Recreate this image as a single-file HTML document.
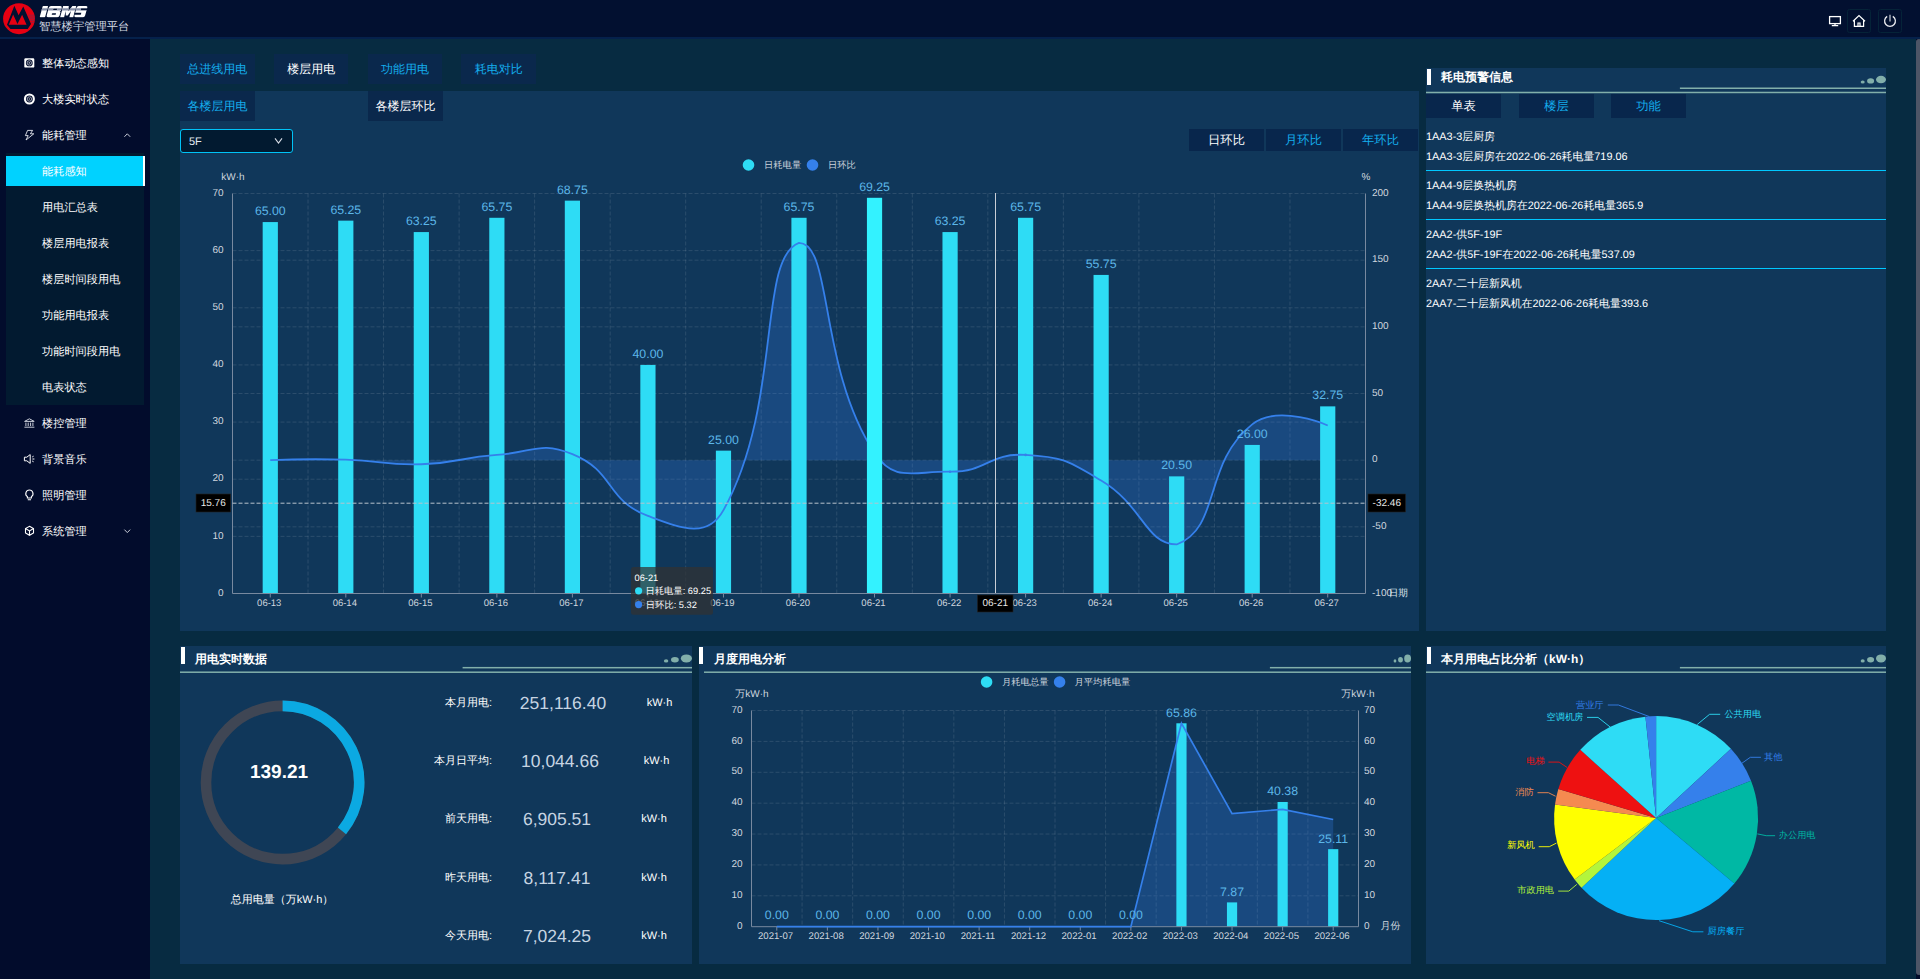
<!DOCTYPE html>
<html lang="zh"><head><meta charset="utf-8"><title>iBMS</title>
<style>
*{box-sizing:border-box;margin:0;padding:0}
html,body{text-rendering:geometricPrecision;width:1920px;height:979px;overflow:hidden;background:#072b41;font-family:"Liberation Sans", sans-serif;color:#fff}
.abs{position:absolute}
.hdr{position:absolute;left:0;top:0;width:1920px;height:37px;background:#021030}
.hline{position:absolute;left:0;top:37px;width:1920px;height:2px;background:#05214b}
.side{position:absolute;left:0;top:39px;width:150px;height:940px;background:#020c2c}
.sub{position:absolute;left:6px;top:153px;width:138px;height:252px;background:#021a30}
.mi{position:absolute;left:42px;height:36px;line-height:37px;font-size:11.2px;color:#fff;white-space:nowrap;font-weight:500}
.act{position:absolute;left:6px;top:156px;width:139px;height:30px;background:#00d2ff;border-right:2px solid #fff}
.tab{position:absolute;width:75px;height:30px;line-height:31.5px;text-align:center;font-size:12px;background:#0a284c;color:#14aeee;white-space:nowrap}
.tab.on{color:#fff}
.btn{position:absolute;width:75px;height:22px;line-height:23.6px;text-align:center;font-size:12.3px;background:#08264c;color:#14aeee;white-space:nowrap}
.btn.on{color:#fff}
.panel{position:absolute;background:#10375a}
.ptitle{position:absolute;font-size:12px;font-weight:bold;color:#fff;white-space:nowrap;line-height:16px}
.pbar{position:absolute;width:4.5px;background:#fff}
.li{position:absolute;left:1426px;font-size:10.9px;color:#fff;white-space:nowrap;line-height:14px}
.sep{position:absolute;left:1426px;width:460px;height:1px;background:#00c8ff}
.rl{position:absolute;font-size:11px;color:#fff;white-space:nowrap;text-align:right;line-height:16px}
.rv{position:absolute;font-size:17.5px;color:#c6d4e2;white-space:nowrap;text-align:center;line-height:22px}
.ru{position:absolute;font-size:11px;color:#fff;white-space:nowrap;line-height:16px}
svg text{font-family:"Liberation Sans", sans-serif;text-rendering:geometricPrecision}
</style></head><body>
<div class="hdr"></div><div class="hline"></div><svg class="abs" style="left:0;top:0" width="160" height="38" viewBox="0 0 160 38">
<ellipse cx="19.0" cy="18.7" rx="15.9" ry="15.45" fill="#e60012"/>
<path d="M14.35 5.8 L6.98 24.8 L10.5 28.9 L27.7 28.9 L31.0 24.05 L23.3 6.4 L18.6 15.3 Z" fill="#021030"/>
<path d="M8.73 24.83 L13.19 14.55 L17.46 24.05 L22.11 14.74 L26.57 24.83 Z" fill="#e60012"/>
<path d="M28 15.2 H34.2 M28.8 17 H34.6 M29.6 18.8 H34.7 M30.4 20.6 H34.6 M31.2 22.4 H34.2" stroke="#7a2a50" stroke-width="0.8" opacity="0.9"/>
<defs><mask id="lgm" maskUnits="userSpaceOnUse" x="-2" y="-13" width="52" height="15">
<g fill="#fff">
<rect x="0" y="-11.4" width="5.4" height="11.4" rx="0.6"/>
<rect x="6.5" y="-11.4" width="12.9" height="11.4" rx="1.8"/>
<path d="M20.4 0 V-11.4 H26 L27 -6 L29.6 -11.4 H33.5 V0 H29.6 V-6.2 L27.6 -1.6 H25.6 L24.4 -6.2 V0 Z"/>
<rect x="34.3" y="-11.4" width="10.7" height="11.4" rx="1.6"/>
</g>
<g fill="#000">
<rect x="11.2" y="-8.9" width="4.2" height="1.5" rx="0.5"/>
<rect x="11.2" y="-4.1" width="4.2" height="1.5" rx="0.5"/>
<path d="M19.6 -6.5 L18.3 -5.7 L19.6 -4.9 Z"/>
<rect x="39" y="-9" width="6.5" height="2"/>
<rect x="33.8" y="-4.4" width="6.6" height="1.9"/>
</g></mask></defs>
<g transform="translate(39.7,17.2) skewX(-15.3) scale(1,0.985)">
<rect x="-1" y="-12" width="48" height="12.5" fill="#fff" mask="url(#lgm)"/>
<rect x="-1" y="-9.2" width="48" height="2.4" fill="#8790a8" mask="url(#lgm)"/>
</g>
</svg><div class="abs" style="left:39px;top:19px;font-size:11.3px;line-height:16px;color:#d3dae3;white-space:nowrap">智慧楼宇管理平台</div><svg class="abs" style="left:1820px;top:0" width="100" height="38" viewBox="1820 0 100 38" fill="none" stroke="#fff" stroke-width="1.3">
<rect x="1847.5" y="9.5" width="23" height="23" rx="2" stroke="#052338" stroke-width="1"/>
<rect x="1878.5" y="9.5" width="23" height="23" rx="2" stroke="#052338" stroke-width="1"/>
<rect x="1829.6" y="16.6" width="10.8" height="7" />
<path d="M1831.8 25.6 H1838.2 M1835 23.6 V25.6" />
<path d="M1853 21.3 L1859 15.6 L1865 21.3 M1854.4 20.4 V26.4 H1863.6 V20.4 M1858 26.4 V23 H1860 V26.4" stroke-width="1.2"/>
<path d="M1887.2 16.4 A5.4 5.4 0 1 0 1892.8 16.4" stroke="#e8e8ee"/>
<path d="M1890 14.8 V21.4" stroke="#9aa0b0" stroke-width="1.6"/>
</svg><div class="side"></div><div class="sub"></div><div class="act"></div><div class="mi" style="top:45.7px">整体动态感知</div><div class="mi" style="top:81.7px">大楼实时状态</div><div class="mi" style="top:117.7px">能耗管理</div><div class="mi" style="top:153.7px">能耗感知</div><div class="mi" style="top:189.7px">用电汇总表</div><div class="mi" style="top:225.7px">楼层用电报表</div><div class="mi" style="top:261.7px">楼层时间段用电</div><div class="mi" style="top:297.7px">功能用电报表</div><div class="mi" style="top:333.7px">功能时间段用电</div><div class="mi" style="top:369.7px">电表状态</div><div class="mi" style="top:405.7px">楼控管理</div><div class="mi" style="top:441.7px">背景音乐</div><div class="mi" style="top:477.7px">照明管理</div><div class="mi" style="top:513.7px">系统管理</div><svg class="abs" style="left:0;top:39px" width="150" height="520" viewBox="0 39 150 520" fill="none" stroke="#fff" stroke-width="1.1">
<rect x="24.3" y="58.2" width="10" height="9.4" rx="1.2" fill="#fff" stroke="none"/>
<circle cx="29.3" cy="62.9" r="3.4" fill="#020c2c" stroke="none"/>
<circle cx="29.3" cy="62.9" r="2.2" fill="none" stroke="#a8aebb" stroke-width="0.9"/>
<circle cx="29.3" cy="62.9" r="0.8" fill="#a8aebb" stroke="none"/>
<circle cx="29.4" cy="99" r="5.5" fill="#fff" stroke="none"/>
<circle cx="29.4" cy="99" r="3.4" fill="#020c2c" stroke="none"/>
<circle cx="29.4" cy="99" r="2.2" fill="none" stroke="#a8aebb" stroke-width="0.9"/>
<circle cx="29.4" cy="99" r="0.8" fill="#a8aebb" stroke="none"/>
<path d="M27.6 130.4 L32.6 130.4 L30.4 133.8 L33.8 133.8 L26 140 L28.2 135.6 L25.4 135.6 Z" stroke-width="0.9" stroke="#e8eaf0"/>
<path d="M124.4 136.8 L127.3 133.8 L130.2 136.8" stroke="#c8ccd8" stroke-width="1"/>
<path d="M24.6 421.4 L29.4 418.8 L34.2 421.4 Z M25.9 422.6 V426 M28.2 422.6 V426 M30.6 422.6 V426 M32.9 422.6 V426 M24.4 427.2 H34.4" stroke-width="1" stroke="#c9cdd8"/>
<path d="M24.4 457.2 H26.8 L30.2 454.6 V463.4 L26.8 460.8 H24.4 Z M32.2 457 L33.6 456.2 M32.4 459 H34.4 M32.2 461 L33.6 461.8" stroke-width="1"/>
<path d="M29.4 490 A3.6 3.6 0 0 1 31.4 496.6 V498 H27.4 V496.6 A3.6 3.6 0 0 1 29.4 490 Z M27.8 499.8 H31" stroke-width="1.1"/>
<path d="M29.5 526.3 L33.5 528.5 V533 L29.5 535.3 L25.5 533 V528.5 Z M25.5 528.5 L29.5 530.9 L33.5 528.5 M29.5 530.9 V535.3" stroke-width="1.1"/>
<path d="M124.4 529.6 L127.3 532.6 L130.2 529.6" stroke="#c8ccd8" stroke-width="1"/>
</svg><div class="tab" style="left:180.0px;top:54px;width:74.7px">总进线用电</div><div class="tab on" style="left:273.8px;top:54px;width:74.7px">楼层用电</div><div class="tab" style="left:367.6px;top:54px;width:74.7px">功能用电</div><div class="tab" style="left:461.4px;top:54px;width:74.7px">耗电对比</div><div class="panel" style="left:180px;top:91px;width:1239px;height:540px"></div><div class="tab" style="left:180px;top:91px">各楼层用电</div><div class="tab on" style="left:368px;top:91px">各楼层环比</div><div class="abs" style="left:180px;top:129px;width:113px;height:24px;border:1.5px solid #00c3f7;border-radius:3px;background:#021a30"></div><div class="abs" style="left:189px;top:133.8px;font-size:11px;line-height:16px;color:#e6edf5">5F</div><svg class="abs" style="left:270px;top:132px" width="18" height="18" viewBox="270 132 18 18"><path d="M275 138.3 L278.5 143 L282 138.3" fill="none" stroke="#d8dde6" stroke-width="1.1"/></svg><div class="btn on" style="left:1189px;top:129px">日环比</div><div class="btn" style="left:1266px;top:129px">月环比</div><div class="btn" style="left:1343px;top:129px">年环比</div><div class="panel" style="left:1426px;top:68px;width:460px;height:563px"></div><div class="pbar" style="left:1426.9px;top:68.5px;height:16.4px;width:4.5px"></div><div class="ptitle" style="left:1441px;top:68.5px">耗电预警信息</div><svg class="abs" style="left:1426px;top:68px" width="460" height="30" viewBox="0 0 460 30"><rect x="0.0" y="23.73" width="460.0" height="1.5" fill="#82afaa"/><rect x="253.9" y="19.50" width="206.1" height="1.5" fill="#82afaa"/><ellipse cx="436.7" cy="13.90" rx="2.00" ry="1.50" fill="#82afaa"/><ellipse cx="444.6" cy="12.90" rx="3.50" ry="2.60" fill="#82afaa"/><ellipse cx="455.0" cy="11.60" rx="5.00" ry="3.75" fill="#82afaa"/></svg><div class="btn on" style="left:1426px;top:94.3px;height:23.7px;line-height:24.5px">单表</div><div class="btn" style="left:1519px;top:94.3px;height:23.7px;line-height:24.5px">楼层</div><div class="btn" style="left:1611px;top:94.3px;height:23.7px;line-height:24.5px">功能</div><div class="li" style="top:129.6px">1AA3-3层厨房</div><div class="li" style="top:149.6px">1AA3-3层厨房在2022-06-26耗电量719.06</div><div class="sep" style="top:170px"></div><div class="li" style="top:178.6px">1AA4-9层换热机房</div><div class="li" style="top:198.6px">1AA4-9层换热机房在2022-06-26耗电量365.9</div><div class="sep" style="top:219px"></div><div class="li" style="top:227.6px">2AA2-供5F-19F</div><div class="li" style="top:247.6px">2AA2-供5F-19F在2022-06-26耗电量537.09</div><div class="sep" style="top:268px"></div><div class="li" style="top:276.6px">2AA7-二十层新风机</div><div class="li" style="top:296.6px">2AA7-二十层新风机在2022-06-26耗电量393.6</div><div class="panel" style="left:180px;top:646px;width:512px;height:318px"></div><div class="panel" style="left:699px;top:646px;width:712px;height:318px"></div><div class="panel" style="left:1426px;top:646px;width:460px;height:318px"></div><div class="pbar" style="left:180.9px;top:646.5px;height:17.6px;width:4.5px"></div><div class="ptitle" style="left:195px;top:650.5px">用电实时数据</div><svg class="abs" style="left:180px;top:646px" width="512" height="30" viewBox="0 0 512 30"><rect x="0.0" y="25.46" width="512.0" height="1.5" fill="#82afaa"/><rect x="282.6" y="20.93" width="229.4" height="1.5" fill="#82afaa"/><ellipse cx="486.1" cy="14.88" rx="2.23" ry="1.61" fill="#82afaa"/><ellipse cx="494.9" cy="13.81" rx="3.90" ry="2.78" fill="#82afaa"/><ellipse cx="506.4" cy="12.42" rx="5.57" ry="4.01" fill="#82afaa"/></svg><div class="pbar" style="left:699.1px;top:646.5px;height:17.6px;width:3.5px"></div><div class="ptitle" style="left:714px;top:650.5px">月度用电分析</div><svg class="abs" style="left:699px;top:646px" width="712" height="30" viewBox="0 0 712 30"><rect x="5.0" y="25.46" width="707.0" height="1.5" fill="#82afaa"/><rect x="570.9" y="20.93" width="141.1" height="1.5" fill="#82afaa"/><ellipse cx="696.0" cy="14.88" rx="1.37" ry="1.61" fill="#82afaa"/><ellipse cx="701.5" cy="13.81" rx="2.40" ry="2.78" fill="#82afaa"/><ellipse cx="708.6" cy="12.42" rx="3.42" ry="4.01" fill="#82afaa"/></svg><div class="pbar" style="left:1426.9px;top:646.5px;height:17.6px;width:4.5px"></div><div class="ptitle" style="left:1441px;top:650.5px">本月用电占比分析（kW·h）</div><svg class="abs" style="left:1426px;top:646px" width="460" height="30" viewBox="0 0 460 30"><rect x="0.0" y="25.46" width="460.0" height="1.5" fill="#82afaa"/><rect x="253.9" y="20.93" width="206.1" height="1.5" fill="#82afaa"/><ellipse cx="436.7" cy="14.88" rx="2.00" ry="1.61" fill="#82afaa"/><ellipse cx="444.6" cy="13.81" rx="3.50" ry="2.78" fill="#82afaa"/><ellipse cx="455.0" cy="12.42" rx="5.00" ry="4.01" fill="#82afaa"/></svg><div class="rl" style="left:392px;width:100px;top:694.8px">本月用电:</div><div class="rv" style="left:503.0px;width:120px;top:691.8px">251,116.40</div><div class="ru" style="left:639.5px;width:40px;text-align:center;top:694.8px">kW·h</div><div class="rl" style="left:392px;width:100px;top:752.9px">本月日平均:</div><div class="rv" style="left:500.0px;width:120px;top:749.9px">10,044.66</div><div class="ru" style="left:636.5px;width:40px;text-align:center;top:752.9px">kW·h</div><div class="rl" style="left:392px;width:100px;top:810.7px">前天用电:</div><div class="rv" style="left:497.0px;width:120px;top:807.7px">6,905.51</div><div class="ru" style="left:634.0px;width:40px;text-align:center;top:810.7px">kW·h</div><div class="rl" style="left:392px;width:100px;top:869.5px">昨天用电:</div><div class="rv" style="left:497.0px;width:120px;top:866.5px">8,117.41</div><div class="ru" style="left:634.0px;width:40px;text-align:center;top:869.5px">kW·h</div><div class="rl" style="left:392px;width:100px;top:927.5px">今天用电:</div><div class="rv" style="left:497.0px;width:120px;top:924.5px">7,024.25</div><div class="ru" style="left:634.0px;width:40px;text-align:center;top:927.5px">kW·h</div><div class="abs" style="left:199px;width:160px;text-align:center;top:761.5px;font-size:19px;font-weight:bold;line-height:22px">139.21</div><div class="abs" style="left:202px;width:160px;text-align:center;top:892px;font-size:11px;line-height:16px;white-space:nowrap">总用电量（万kW·h）</div><div class="abs" style="left:1916px;top:39px;width:4px;height:940px;background:#020b2a"></div><div class="abs" style="left:1916px;top:39px;width:6px;height:935.6px;background:#4d5566;border-radius:3px"></div><svg class="abs" style="left:0;top:0" width="1920" height="979" viewBox="0 0 1920 979"><path d="M232.5 536.36 H1365.5" stroke="rgba(255,255,255,0.115)" stroke-width="1" stroke-dasharray="4 2" fill="none"/><path d="M232.5 479.21 H1365.5" stroke="rgba(255,255,255,0.115)" stroke-width="1" stroke-dasharray="4 2" fill="none"/><path d="M232.5 422.07 H1365.5" stroke="rgba(255,255,255,0.115)" stroke-width="1" stroke-dasharray="4 2" fill="none"/><path d="M232.5 364.93 H1365.5" stroke="rgba(255,255,255,0.115)" stroke-width="1" stroke-dasharray="4 2" fill="none"/><path d="M232.5 307.79 H1365.5" stroke="rgba(255,255,255,0.115)" stroke-width="1" stroke-dasharray="4 2" fill="none"/><path d="M232.5 250.64 H1365.5" stroke="rgba(255,255,255,0.115)" stroke-width="1" stroke-dasharray="4 2" fill="none"/><path d="M232.5 193.50 H1365.5" stroke="rgba(255,255,255,0.115)" stroke-width="1" stroke-dasharray="4 2" fill="none"/><path d="M232.5 526.83 H1365.5" stroke="rgba(255,255,255,0.115)" stroke-width="1" stroke-dasharray="4 2" fill="none"/><path d="M232.5 460.17 H1365.5" stroke="rgba(255,255,255,0.115)" stroke-width="1" stroke-dasharray="4 2" fill="none"/><path d="M232.5 393.50 H1365.5" stroke="rgba(255,255,255,0.115)" stroke-width="1" stroke-dasharray="4 2" fill="none"/><path d="M232.5 326.83 H1365.5" stroke="rgba(255,255,255,0.115)" stroke-width="1" stroke-dasharray="4 2" fill="none"/><path d="M232.5 260.17 H1365.5" stroke="rgba(255,255,255,0.115)" stroke-width="1" stroke-dasharray="4 2" fill="none"/><path d="M308.03 193.5 V593.5" stroke="rgba(255,255,255,0.115)" stroke-width="1" stroke-dasharray="4 2" fill="none"/><path d="M383.57 193.5 V593.5" stroke="rgba(255,255,255,0.115)" stroke-width="1" stroke-dasharray="4 2" fill="none"/><path d="M459.10 193.5 V593.5" stroke="rgba(255,255,255,0.115)" stroke-width="1" stroke-dasharray="4 2" fill="none"/><path d="M534.63 193.5 V593.5" stroke="rgba(255,255,255,0.115)" stroke-width="1" stroke-dasharray="4 2" fill="none"/><path d="M610.17 193.5 V593.5" stroke="rgba(255,255,255,0.115)" stroke-width="1" stroke-dasharray="4 2" fill="none"/><path d="M685.70 193.5 V593.5" stroke="rgba(255,255,255,0.115)" stroke-width="1" stroke-dasharray="4 2" fill="none"/><path d="M761.23 193.5 V593.5" stroke="rgba(255,255,255,0.115)" stroke-width="1" stroke-dasharray="4 2" fill="none"/><path d="M836.77 193.5 V593.5" stroke="rgba(255,255,255,0.115)" stroke-width="1" stroke-dasharray="4 2" fill="none"/><path d="M912.30 193.5 V593.5" stroke="rgba(255,255,255,0.115)" stroke-width="1" stroke-dasharray="4 2" fill="none"/><path d="M987.83 193.5 V593.5" stroke="rgba(255,255,255,0.115)" stroke-width="1" stroke-dasharray="4 2" fill="none"/><path d="M1063.37 193.5 V593.5" stroke="rgba(255,255,255,0.115)" stroke-width="1" stroke-dasharray="4 2" fill="none"/><path d="M1138.90 193.5 V593.5" stroke="rgba(255,255,255,0.115)" stroke-width="1" stroke-dasharray="4 2" fill="none"/><path d="M1214.43 193.5 V593.5" stroke="rgba(255,255,255,0.115)" stroke-width="1" stroke-dasharray="4 2" fill="none"/><path d="M1289.97 193.5 V593.5" stroke="rgba(255,255,255,0.115)" stroke-width="1" stroke-dasharray="4 2" fill="none"/><path d="M270.27 460.17 C270.27 460.17 308.07 458.64 345.80 459.66 C383.60 460.68 383.68 465.45 421.33 464.26 C459.21 463.07 458.96 457.45 496.87 454.90 C534.49 452.37 539.45 440.78 572.40 454.09 C614.98 471.29 605.40 500.14 647.93 515.93 C680.94 528.18 707.28 539.42 723.47 510.17 C782.82 402.88 757.13 258.66 799.00 242.83 C832.67 242.83 818.51 368.19 874.53 453.07 C894.04 482.63 912.20 471.26 950.07 471.71 C987.73 472.17 988.40 452.75 1025.60 454.90 C1063.93 457.12 1067.44 460.47 1101.13 480.45 C1142.97 505.26 1145.62 544.47 1176.67 544.47 C1221.15 527.97 1202.91 463.19 1252.20 424.39 C1278.45 403.73 1327.73 425.55 1327.73 425.55 L1327.73 460.17 L270.27 460.17 Z" fill="rgba(53,128,235,0.26)" stroke="none"/><rect x="262.67" y="222.07" width="15.20" height="371.43" fill="#2edcf5"/><rect x="338.20" y="220.64" width="15.20" height="372.86" fill="#2edcf5"/><rect x="413.73" y="232.07" width="15.20" height="361.43" fill="#2edcf5"/><rect x="489.27" y="217.79" width="15.20" height="375.71" fill="#2edcf5"/><rect x="564.80" y="200.64" width="15.20" height="392.86" fill="#2edcf5"/><rect x="640.33" y="364.93" width="15.20" height="228.57" fill="#2edcf5"/><rect x="715.87" y="450.64" width="15.20" height="142.86" fill="#2edcf5"/><rect x="791.40" y="217.79" width="15.20" height="375.71" fill="#2edcf5"/><rect x="942.47" y="232.07" width="15.20" height="361.43" fill="#2edcf5"/><rect x="1018.00" y="217.79" width="15.20" height="375.71" fill="#2edcf5"/><rect x="1093.53" y="274.93" width="15.20" height="318.57" fill="#2edcf5"/><rect x="1169.07" y="476.36" width="15.20" height="117.14" fill="#2edcf5"/><rect x="1244.60" y="444.93" width="15.20" height="148.57" fill="#2edcf5"/><rect x="1320.13" y="406.36" width="15.20" height="187.14" fill="#2edcf5"/><path d="M270.27 460.17 C270.27 460.17 308.07 458.64 345.80 459.66 C383.60 460.68 383.68 465.45 421.33 464.26 C459.21 463.07 458.96 457.45 496.87 454.90 C534.49 452.37 539.45 440.78 572.40 454.09 C614.98 471.29 605.40 500.14 647.93 515.93 C680.94 528.18 707.28 539.42 723.47 510.17 C782.82 402.88 757.13 258.66 799.00 242.83 C832.67 242.83 818.51 368.19 874.53 453.07 C894.04 482.63 912.20 471.26 950.07 471.71 C987.73 472.17 988.40 452.75 1025.60 454.90 C1063.93 457.12 1067.44 460.47 1101.13 480.45 C1142.97 505.26 1145.62 544.47 1176.67 544.47 C1221.15 527.97 1202.91 463.19 1252.20 424.39 C1278.45 403.73 1327.73 425.55 1327.73 425.55" fill="none" stroke="#3580eb" stroke-width="1.8"/><circle cx="950.07" cy="471.71" r="1.3" fill="#3580eb"/><circle cx="1025.60" cy="454.90" r="1.3" fill="#3580eb"/><rect x="866.93" y="197.79" width="15.20" height="395.71" fill="#33f2ff"/><path d="M232.5 193.5 V593.5 H1365.5 V193.5" stroke="#78899f" stroke-width="1" fill="none"/><path d="M270.27 593.5 V597.5" stroke="#78899f" stroke-width="1"/><text x="269.27" y="603.60" font-size="9.5" fill="#cfd6df" text-anchor="middle" font-weight="normal" dominant-baseline="central" >06-13</text><text x="270.27" y="211.17" font-size="12.3" fill="#5cb6e8" text-anchor="middle" font-weight="normal" dominant-baseline="central" >65.00</text><path d="M345.80 593.5 V597.5" stroke="#78899f" stroke-width="1"/><text x="344.80" y="603.60" font-size="9.5" fill="#cfd6df" text-anchor="middle" font-weight="normal" dominant-baseline="central" >06-14</text><text x="345.80" y="209.74" font-size="12.3" fill="#5cb6e8" text-anchor="middle" font-weight="normal" dominant-baseline="central" >65.25</text><path d="M421.33 593.5 V597.5" stroke="#78899f" stroke-width="1"/><text x="420.33" y="603.60" font-size="9.5" fill="#cfd6df" text-anchor="middle" font-weight="normal" dominant-baseline="central" >06-15</text><text x="421.33" y="221.17" font-size="12.3" fill="#5cb6e8" text-anchor="middle" font-weight="normal" dominant-baseline="central" >63.25</text><path d="M496.87 593.5 V597.5" stroke="#78899f" stroke-width="1"/><text x="495.87" y="603.60" font-size="9.5" fill="#cfd6df" text-anchor="middle" font-weight="normal" dominant-baseline="central" >06-16</text><text x="496.87" y="206.89" font-size="12.3" fill="#5cb6e8" text-anchor="middle" font-weight="normal" dominant-baseline="central" >65.75</text><path d="M572.40 593.5 V597.5" stroke="#78899f" stroke-width="1"/><text x="571.40" y="603.60" font-size="9.5" fill="#cfd6df" text-anchor="middle" font-weight="normal" dominant-baseline="central" >06-17</text><text x="572.40" y="189.74" font-size="12.3" fill="#5cb6e8" text-anchor="middle" font-weight="normal" dominant-baseline="central" >68.75</text><path d="M647.93 593.5 V597.5" stroke="#78899f" stroke-width="1"/><text x="646.93" y="603.60" font-size="9.5" fill="#cfd6df" text-anchor="middle" font-weight="normal" dominant-baseline="central" >06-18</text><text x="647.93" y="354.03" font-size="12.3" fill="#5cb6e8" text-anchor="middle" font-weight="normal" dominant-baseline="central" >40.00</text><path d="M723.47 593.5 V597.5" stroke="#78899f" stroke-width="1"/><text x="722.47" y="603.60" font-size="9.5" fill="#cfd6df" text-anchor="middle" font-weight="normal" dominant-baseline="central" >06-19</text><text x="723.47" y="439.74" font-size="12.3" fill="#5cb6e8" text-anchor="middle" font-weight="normal" dominant-baseline="central" >25.00</text><path d="M799.00 593.5 V597.5" stroke="#78899f" stroke-width="1"/><text x="798.00" y="603.60" font-size="9.5" fill="#cfd6df" text-anchor="middle" font-weight="normal" dominant-baseline="central" >06-20</text><text x="799.00" y="206.89" font-size="12.3" fill="#5cb6e8" text-anchor="middle" font-weight="normal" dominant-baseline="central" >65.75</text><path d="M874.53 593.5 V597.5" stroke="#78899f" stroke-width="1"/><text x="873.53" y="603.60" font-size="9.5" fill="#cfd6df" text-anchor="middle" font-weight="normal" dominant-baseline="central" >06-21</text><text x="874.53" y="186.89" font-size="12.3" fill="#5cb6e8" text-anchor="middle" font-weight="normal" dominant-baseline="central" >69.25</text><path d="M950.07 593.5 V597.5" stroke="#78899f" stroke-width="1"/><text x="949.07" y="603.60" font-size="9.5" fill="#cfd6df" text-anchor="middle" font-weight="normal" dominant-baseline="central" >06-22</text><text x="950.07" y="221.17" font-size="12.3" fill="#5cb6e8" text-anchor="middle" font-weight="normal" dominant-baseline="central" >63.25</text><path d="M1025.60 593.5 V597.5" stroke="#78899f" stroke-width="1"/><text x="1024.60" y="603.60" font-size="9.5" fill="#cfd6df" text-anchor="middle" font-weight="normal" dominant-baseline="central" >06-23</text><text x="1025.60" y="206.89" font-size="12.3" fill="#5cb6e8" text-anchor="middle" font-weight="normal" dominant-baseline="central" >65.75</text><path d="M1101.13 593.5 V597.5" stroke="#78899f" stroke-width="1"/><text x="1100.13" y="603.60" font-size="9.5" fill="#cfd6df" text-anchor="middle" font-weight="normal" dominant-baseline="central" >06-24</text><text x="1101.13" y="264.03" font-size="12.3" fill="#5cb6e8" text-anchor="middle" font-weight="normal" dominant-baseline="central" >55.75</text><path d="M1176.67 593.5 V597.5" stroke="#78899f" stroke-width="1"/><text x="1175.67" y="603.60" font-size="9.5" fill="#cfd6df" text-anchor="middle" font-weight="normal" dominant-baseline="central" >06-25</text><text x="1176.67" y="465.46" font-size="12.3" fill="#5cb6e8" text-anchor="middle" font-weight="normal" dominant-baseline="central" >20.50</text><path d="M1252.20 593.5 V597.5" stroke="#78899f" stroke-width="1"/><text x="1251.20" y="603.60" font-size="9.5" fill="#cfd6df" text-anchor="middle" font-weight="normal" dominant-baseline="central" >06-26</text><text x="1252.20" y="434.03" font-size="12.3" fill="#5cb6e8" text-anchor="middle" font-weight="normal" dominant-baseline="central" >26.00</text><path d="M1327.73 593.5 V597.5" stroke="#78899f" stroke-width="1"/><text x="1326.73" y="603.60" font-size="9.5" fill="#cfd6df" text-anchor="middle" font-weight="normal" dominant-baseline="central" >06-27</text><text x="1327.73" y="395.46" font-size="12.3" fill="#5cb6e8" text-anchor="middle" font-weight="normal" dominant-baseline="central" >32.75</text><text x="223.50" y="593.20" font-size="10" fill="#cfd6df" text-anchor="end" font-weight="normal" dominant-baseline="central" >0</text><text x="223.50" y="536.06" font-size="10" fill="#cfd6df" text-anchor="end" font-weight="normal" dominant-baseline="central" >10</text><text x="223.50" y="478.91" font-size="10" fill="#cfd6df" text-anchor="end" font-weight="normal" dominant-baseline="central" >20</text><text x="223.50" y="421.77" font-size="10" fill="#cfd6df" text-anchor="end" font-weight="normal" dominant-baseline="central" >30</text><text x="223.50" y="364.63" font-size="10" fill="#cfd6df" text-anchor="end" font-weight="normal" dominant-baseline="central" >40</text><text x="223.50" y="307.49" font-size="10" fill="#cfd6df" text-anchor="end" font-weight="normal" dominant-baseline="central" >50</text><text x="223.50" y="250.34" font-size="10" fill="#cfd6df" text-anchor="end" font-weight="normal" dominant-baseline="central" >60</text><text x="223.50" y="193.20" font-size="10" fill="#cfd6df" text-anchor="end" font-weight="normal" dominant-baseline="central" >70</text><text x="1372.00" y="593.20" font-size="10" fill="#cfd6df" text-anchor="start" font-weight="normal" dominant-baseline="central" >-100</text><text x="1372.00" y="526.53" font-size="10" fill="#cfd6df" text-anchor="start" font-weight="normal" dominant-baseline="central" >-50</text><text x="1372.00" y="459.87" font-size="10" fill="#cfd6df" text-anchor="start" font-weight="normal" dominant-baseline="central" >0</text><text x="1372.00" y="393.20" font-size="10" fill="#cfd6df" text-anchor="start" font-weight="normal" dominant-baseline="central" >50</text><text x="1372.00" y="326.53" font-size="10" fill="#cfd6df" text-anchor="start" font-weight="normal" dominant-baseline="central" >100</text><text x="1372.00" y="259.87" font-size="10" fill="#cfd6df" text-anchor="start" font-weight="normal" dominant-baseline="central" >150</text><text x="1372.00" y="193.20" font-size="10" fill="#cfd6df" text-anchor="start" font-weight="normal" dominant-baseline="central" >200</text><text x="233.00" y="177.40" font-size="10" fill="#cfd6df" text-anchor="middle" font-weight="normal" dominant-baseline="central" >kW·h</text><text x="1366.00" y="177.40" font-size="10" fill="#cfd6df" text-anchor="middle" font-weight="normal" dominant-baseline="central" >%</text><text x="1388.70" y="593.30" font-size="9.6" fill="#dfe5ec" text-anchor="start" font-weight="normal" dominant-baseline="central" >日期</text><circle cx="748.5" cy="165" r="5.8" fill="#2edcf5"/><text x="764.00" y="165.00" font-size="9.3" fill="#cfd6df" text-anchor="start" font-weight="normal" dominant-baseline="central" >日耗电量</text><circle cx="812.5" cy="165" r="5.8" fill="#3580eb"/><text x="828.00" y="165.00" font-size="9.3" fill="#cfd6df" text-anchor="start" font-weight="normal" dominant-baseline="central" >日环比</text><path d="M995.5 193 V593" stroke="#c9ced6" stroke-width="1"/><path d="M232.5 503.2 H1365.5" stroke="#b9c2cc" stroke-width="1" stroke-dasharray="4 2"/><rect x="196" y="494" width="34.5" height="18" fill="#000" stroke="#222" stroke-width="0.6"/><text x="213.20" y="503.60" font-size="10" fill="#e8e8e8" text-anchor="middle" font-weight="normal" dominant-baseline="central" >15.76</text><rect x="1368" y="494" width="37.5" height="18" fill="#000" stroke="#222" stroke-width="0.6"/><text x="1386.80" y="503.60" font-size="10" fill="#e8e8e8" text-anchor="middle" font-weight="normal" dominant-baseline="central" >-32.46</text><rect x="977.5" y="595" width="35.5" height="17" fill="#000" stroke="#222" stroke-width="0.6"/><text x="995.30" y="603.30" font-size="10" fill="#e8e8e8" text-anchor="middle" font-weight="normal" dominant-baseline="central" >06-21</text><rect x="631" y="567" width="82" height="47.8" rx="2.5" fill="rgba(50,50,50,0.72)"/><text x="634.50" y="577.50" font-size="9.3" fill="#fff" text-anchor="start" font-weight="normal" dominant-baseline="central" >06-21</text><circle cx="638.6" cy="590.8" r="3.6" fill="#2edcf5"/><text x="645.50" y="590.60" font-size="9.3" fill="#fff" text-anchor="start" font-weight="normal" dominant-baseline="central" >日耗电量: 69.25</text><circle cx="638.6" cy="604.6" r="3.6" fill="#3580eb"/><text x="645.80" y="605.00" font-size="9.3" fill="#fff" text-anchor="start" font-weight="normal" dominant-baseline="central" >日环比: 5.32</text><circle cx="282.6" cy="782.5" r="76.6" fill="none" stroke="#3f4654" stroke-width="10.6"/><path d="M282.60 705.90 A76.6 76.6 0 0 1 341.96 830.91" fill="none" stroke="#0ba9e2" stroke-width="10.6"/><path d="M751.5 895.81 H1358.5" stroke="rgba(255,255,255,0.115)" stroke-width="1" stroke-dasharray="4 2" fill="none"/><path d="M751.5 864.93 H1358.5" stroke="rgba(255,255,255,0.115)" stroke-width="1" stroke-dasharray="4 2" fill="none"/><path d="M751.5 834.04 H1358.5" stroke="rgba(255,255,255,0.115)" stroke-width="1" stroke-dasharray="4 2" fill="none"/><path d="M751.5 803.16 H1358.5" stroke="rgba(255,255,255,0.115)" stroke-width="1" stroke-dasharray="4 2" fill="none"/><path d="M751.5 772.27 H1358.5" stroke="rgba(255,255,255,0.115)" stroke-width="1" stroke-dasharray="4 2" fill="none"/><path d="M751.5 741.39 H1358.5" stroke="rgba(255,255,255,0.115)" stroke-width="1" stroke-dasharray="4 2" fill="none"/><path d="M751.5 710.50 H1358.5" stroke="rgba(255,255,255,0.115)" stroke-width="1" stroke-dasharray="4 2" fill="none"/><path d="M802.08 710.5 V926.7" stroke="rgba(255,255,255,0.115)" stroke-width="1" stroke-dasharray="4 2" fill="none"/><path d="M852.67 710.5 V926.7" stroke="rgba(255,255,255,0.115)" stroke-width="1" stroke-dasharray="4 2" fill="none"/><path d="M903.25 710.5 V926.7" stroke="rgba(255,255,255,0.115)" stroke-width="1" stroke-dasharray="4 2" fill="none"/><path d="M953.83 710.5 V926.7" stroke="rgba(255,255,255,0.115)" stroke-width="1" stroke-dasharray="4 2" fill="none"/><path d="M1004.42 710.5 V926.7" stroke="rgba(255,255,255,0.115)" stroke-width="1" stroke-dasharray="4 2" fill="none"/><path d="M1055.00 710.5 V926.7" stroke="rgba(255,255,255,0.115)" stroke-width="1" stroke-dasharray="4 2" fill="none"/><path d="M1105.58 710.5 V926.7" stroke="rgba(255,255,255,0.115)" stroke-width="1" stroke-dasharray="4 2" fill="none"/><path d="M1156.17 710.5 V926.7" stroke="rgba(255,255,255,0.115)" stroke-width="1" stroke-dasharray="4 2" fill="none"/><path d="M1206.75 710.5 V926.7" stroke="rgba(255,255,255,0.115)" stroke-width="1" stroke-dasharray="4 2" fill="none"/><path d="M1257.33 710.5 V926.7" stroke="rgba(255,255,255,0.115)" stroke-width="1" stroke-dasharray="4 2" fill="none"/><path d="M1307.92 710.5 V926.7" stroke="rgba(255,255,255,0.115)" stroke-width="1" stroke-dasharray="4 2" fill="none"/><path d="M776.79 926.70 L827.38 926.70 L877.96 926.70 L928.54 926.70 L979.12 926.70 L1029.71 926.70 L1080.29 926.70 L1130.88 926.70 L1181.46 723.29 L1232.04 813.66 L1282.62 809.33 L1333.21 819.53 L1333.21 926.70 L776.79 926.70 Z" fill="rgba(53,128,235,0.26)"/><rect x="1176.36" y="723.29" width="10.20" height="203.41" fill="#2edcf5"/><rect x="1226.94" y="902.39" width="10.20" height="24.31" fill="#2edcf5"/><rect x="1277.53" y="801.98" width="10.20" height="124.72" fill="#2edcf5"/><rect x="1328.11" y="849.15" width="10.20" height="77.55" fill="#2edcf5"/><path d="M751.5 710.5 V926.7 H1358.5 V710.5" stroke="#78899f" stroke-width="1" fill="none"/><path d="M776.79 926.7 V930.7" stroke="#78899f" stroke-width="1"/><text x="775.59" y="936.90" font-size="9.6" fill="#cfd6df" text-anchor="middle" font-weight="normal" dominant-baseline="central" >2021-07</text><path d="M827.38 926.7 V930.7" stroke="#78899f" stroke-width="1"/><text x="826.17" y="936.90" font-size="9.6" fill="#cfd6df" text-anchor="middle" font-weight="normal" dominant-baseline="central" >2021-08</text><path d="M877.96 926.7 V930.7" stroke="#78899f" stroke-width="1"/><text x="876.76" y="936.90" font-size="9.6" fill="#cfd6df" text-anchor="middle" font-weight="normal" dominant-baseline="central" >2021-09</text><path d="M928.54 926.7 V930.7" stroke="#78899f" stroke-width="1"/><text x="927.34" y="936.90" font-size="9.6" fill="#cfd6df" text-anchor="middle" font-weight="normal" dominant-baseline="central" >2021-10</text><path d="M979.12 926.7 V930.7" stroke="#78899f" stroke-width="1"/><text x="977.92" y="936.90" font-size="9.6" fill="#cfd6df" text-anchor="middle" font-weight="normal" dominant-baseline="central" >2021-11</text><path d="M1029.71 926.7 V930.7" stroke="#78899f" stroke-width="1"/><text x="1028.51" y="936.90" font-size="9.6" fill="#cfd6df" text-anchor="middle" font-weight="normal" dominant-baseline="central" >2021-12</text><path d="M1080.29 926.7 V930.7" stroke="#78899f" stroke-width="1"/><text x="1079.09" y="936.90" font-size="9.6" fill="#cfd6df" text-anchor="middle" font-weight="normal" dominant-baseline="central" >2022-01</text><path d="M1130.88 926.7 V930.7" stroke="#78899f" stroke-width="1"/><text x="1129.67" y="936.90" font-size="9.6" fill="#cfd6df" text-anchor="middle" font-weight="normal" dominant-baseline="central" >2022-02</text><path d="M1181.46 926.7 V930.7" stroke="#78899f" stroke-width="1"/><text x="1180.26" y="936.90" font-size="9.6" fill="#cfd6df" text-anchor="middle" font-weight="normal" dominant-baseline="central" >2022-03</text><path d="M1232.04 926.7 V930.7" stroke="#78899f" stroke-width="1"/><text x="1230.84" y="936.90" font-size="9.6" fill="#cfd6df" text-anchor="middle" font-weight="normal" dominant-baseline="central" >2022-04</text><path d="M1282.62 926.7 V930.7" stroke="#78899f" stroke-width="1"/><text x="1281.42" y="936.90" font-size="9.6" fill="#cfd6df" text-anchor="middle" font-weight="normal" dominant-baseline="central" >2022-05</text><path d="M1333.21 926.7 V930.7" stroke="#78899f" stroke-width="1"/><text x="1332.01" y="936.90" font-size="9.6" fill="#cfd6df" text-anchor="middle" font-weight="normal" dominant-baseline="central" >2022-06</text><path d="M776.79 926.70 L827.38 926.70 L877.96 926.70 L928.54 926.70 L979.12 926.70 L1029.71 926.70 L1080.29 926.70 L1130.88 926.70 L1181.46 723.29 L1232.04 813.66 L1282.62 809.33 L1333.21 819.53" fill="none" stroke="#3580eb" stroke-width="1.7"/><text x="776.79" y="915.40" font-size="12.3" fill="#5cb6e8" text-anchor="middle" font-weight="normal" dominant-baseline="central" >0.00</text><text x="827.38" y="915.40" font-size="12.3" fill="#5cb6e8" text-anchor="middle" font-weight="normal" dominant-baseline="central" >0.00</text><text x="877.96" y="915.40" font-size="12.3" fill="#5cb6e8" text-anchor="middle" font-weight="normal" dominant-baseline="central" >0.00</text><text x="928.54" y="915.40" font-size="12.3" fill="#5cb6e8" text-anchor="middle" font-weight="normal" dominant-baseline="central" >0.00</text><text x="979.12" y="915.40" font-size="12.3" fill="#5cb6e8" text-anchor="middle" font-weight="normal" dominant-baseline="central" >0.00</text><text x="1029.71" y="915.40" font-size="12.3" fill="#5cb6e8" text-anchor="middle" font-weight="normal" dominant-baseline="central" >0.00</text><text x="1080.29" y="915.40" font-size="12.3" fill="#5cb6e8" text-anchor="middle" font-weight="normal" dominant-baseline="central" >0.00</text><text x="1130.88" y="915.40" font-size="12.3" fill="#5cb6e8" text-anchor="middle" font-weight="normal" dominant-baseline="central" >0.00</text><text x="1181.46" y="712.69" font-size="12.3" fill="#5cb6e8" text-anchor="middle" font-weight="normal" dominant-baseline="central" >65.86</text><text x="1232.04" y="891.79" font-size="12.3" fill="#5cb6e8" text-anchor="middle" font-weight="normal" dominant-baseline="central" >7.87</text><text x="1282.62" y="791.38" font-size="12.3" fill="#5cb6e8" text-anchor="middle" font-weight="normal" dominant-baseline="central" >40.38</text><text x="1333.21" y="838.55" font-size="12.3" fill="#5cb6e8" text-anchor="middle" font-weight="normal" dominant-baseline="central" >25.11</text><text x="742.50" y="926.40" font-size="10" fill="#cfd6df" text-anchor="end" font-weight="normal" dominant-baseline="central" >0</text><text x="1364.00" y="926.40" font-size="10" fill="#cfd6df" text-anchor="start" font-weight="normal" dominant-baseline="central" >0</text><text x="742.50" y="895.51" font-size="10" fill="#cfd6df" text-anchor="end" font-weight="normal" dominant-baseline="central" >10</text><text x="1364.00" y="895.51" font-size="10" fill="#cfd6df" text-anchor="start" font-weight="normal" dominant-baseline="central" >10</text><text x="742.50" y="864.63" font-size="10" fill="#cfd6df" text-anchor="end" font-weight="normal" dominant-baseline="central" >20</text><text x="1364.00" y="864.63" font-size="10" fill="#cfd6df" text-anchor="start" font-weight="normal" dominant-baseline="central" >20</text><text x="742.50" y="833.74" font-size="10" fill="#cfd6df" text-anchor="end" font-weight="normal" dominant-baseline="central" >30</text><text x="1364.00" y="833.74" font-size="10" fill="#cfd6df" text-anchor="start" font-weight="normal" dominant-baseline="central" >30</text><text x="742.50" y="802.86" font-size="10" fill="#cfd6df" text-anchor="end" font-weight="normal" dominant-baseline="central" >40</text><text x="1364.00" y="802.86" font-size="10" fill="#cfd6df" text-anchor="start" font-weight="normal" dominant-baseline="central" >40</text><text x="742.50" y="771.97" font-size="10" fill="#cfd6df" text-anchor="end" font-weight="normal" dominant-baseline="central" >50</text><text x="1364.00" y="771.97" font-size="10" fill="#cfd6df" text-anchor="start" font-weight="normal" dominant-baseline="central" >50</text><text x="742.50" y="741.09" font-size="10" fill="#cfd6df" text-anchor="end" font-weight="normal" dominant-baseline="central" >60</text><text x="1364.00" y="741.09" font-size="10" fill="#cfd6df" text-anchor="start" font-weight="normal" dominant-baseline="central" >60</text><text x="742.50" y="710.20" font-size="10" fill="#cfd6df" text-anchor="end" font-weight="normal" dominant-baseline="central" >70</text><text x="1364.00" y="710.20" font-size="10" fill="#cfd6df" text-anchor="start" font-weight="normal" dominant-baseline="central" >70</text><text x="752.00" y="694.30" font-size="10" fill="#cfd6df" text-anchor="middle" font-weight="normal" dominant-baseline="central" >万kW·h</text><text x="1358.00" y="694.30" font-size="10" fill="#cfd6df" text-anchor="middle" font-weight="normal" dominant-baseline="central" >万kW·h</text><text x="1380.50" y="926.20" font-size="10" fill="#cfd6df" text-anchor="start" font-weight="normal" dominant-baseline="central" >月份</text><circle cx="986.6" cy="682" r="5.8" fill="#2edcf5"/><text x="1002.00" y="682.00" font-size="9.3" fill="#cfd6df" text-anchor="start" font-weight="normal" dominant-baseline="central" >月耗电总量</text><circle cx="1059.6" cy="682" r="5.8" fill="#3580eb"/><text x="1074.50" y="682.00" font-size="9.3" fill="#cfd6df" text-anchor="start" font-weight="normal" dominant-baseline="central" >月平均耗电量</text><path d="M1656.10 818.10 L1656.10 716.10 A102.0 102.0 0 0 1 1730.94 748.80 Z" fill="#2edcf5"/><path d="M1656.10 818.10 L1730.94 748.80 A102.0 102.0 0 0 1 1751.00 780.72 Z" fill="#3580eb"/><path d="M1656.10 818.10 L1751.00 780.72 A102.0 102.0 0 0 1 1734.35 883.53 Z" fill="#00b8a4"/><path d="M1656.10 818.10 L1734.35 883.53 A102.0 102.0 0 0 1 1581.50 887.66 Z" fill="#05b0f5"/><path d="M1656.10 818.10 L1581.50 887.66 A102.0 102.0 0 0 1 1574.64 879.49 Z" fill="#b4f53c"/><path d="M1656.10 818.10 L1574.64 879.49 A102.0 102.0 0 0 1 1555.02 804.43 Z" fill="#ffff00"/><path d="M1656.10 818.10 L1555.02 804.43 A102.0 102.0 0 0 1 1558.35 788.96 Z" fill="#f58a50"/><path d="M1656.10 818.10 L1558.35 788.96 A102.0 102.0 0 0 1 1580.30 749.85 Z" fill="#ee1111"/><path d="M1656.10 818.10 L1580.30 749.85 A102.0 102.0 0 0 1 1645.44 716.66 Z" fill="#2edcf5"/><path d="M1656.10 818.10 L1645.44 716.66 A102.0 102.0 0 0 1 1656.10 716.10 Z" fill="#3580eb"/><path d="M1697.2 724.5 L1709.6 714.3 L1720.2 714.3" fill="none" stroke="#2edcf5" stroke-width="1" opacity="0.9"/><text x="1724.40" y="713.90" font-size="9.2" fill="#2edcf5" text-anchor="start" font-weight="normal" dominant-baseline="central" >公共用电</text><path d="M1741.5 763.5 L1750.3 757.3 L1760.9 757.3" fill="none" stroke="#3580eb" stroke-width="1" opacity="0.9"/><text x="1764.00" y="756.90" font-size="9.2" fill="#3580eb" text-anchor="start" font-weight="normal" dominant-baseline="central" >其他</text><path d="M1757.4 833.9 L1766.2 835.7 L1775.1 835.7" fill="none" stroke="#00b8a4" stroke-width="1" opacity="0.9"/><text x="1778.80" y="834.80" font-size="9.2" fill="#00b8a4" text-anchor="start" font-weight="normal" dominant-baseline="central" >办公用电</text><path d="M1659.1 920.7 L1692.8 931.8 L1703.4 931.8" fill="none" stroke="#05b0f5" stroke-width="1" opacity="0.9"/><text x="1707.60" y="930.80" font-size="9.2" fill="#05b0f5" text-anchor="start" font-weight="normal" dominant-baseline="central" >厨房餐厅</text><path d="M1576.8 884.4 L1568.8 891.1 L1558.2 891.1" fill="none" stroke="#b4f53c" stroke-width="1" opacity="0.9"/><text x="1554.00" y="889.70" font-size="9.2" fill="#b4f53c" text-anchor="end" font-weight="normal" dominant-baseline="central" >市政用电</text><path d="M1556.4 843.1 L1549.3 846.7 L1538.7 846.7" fill="none" stroke="#ffff00" stroke-width="1" opacity="0.9"/><text x="1534.80" y="845.40" font-size="9.2" fill="#ffff00" text-anchor="end" font-weight="normal" dominant-baseline="central" >新风机</text><path d="M1555.5 796.2 L1548.4 792.7 L1537.5 792.7" fill="none" stroke="#f58a50" stroke-width="1" opacity="0.9"/><text x="1533.60" y="792.40" font-size="9.2" fill="#f58a50" text-anchor="end" font-weight="normal" dominant-baseline="central" >消防</text><path d="M1567.0 767.4 L1559.1 762.1 L1548.4 762.1" fill="none" stroke="#ee1111" stroke-width="1" opacity="0.9"/><text x="1544.70" y="760.80" font-size="9.2" fill="#ee1111" text-anchor="end" font-weight="normal" dominant-baseline="central" >电梯</text><path d="M1610.4 727.2 L1598.0 717.4 L1587.0 717.4" fill="none" stroke="#2edcf5" stroke-width="1" opacity="0.9"/><text x="1583.30" y="717.40" font-size="9.2" fill="#2edcf5" text-anchor="end" font-weight="normal" dominant-baseline="central" >空调机房</text><path d="M1649.4 716.6 L1618.4 705.0 L1607.8 705.0" fill="none" stroke="#3580eb" stroke-width="1" opacity="0.9"/><text x="1603.50" y="705.00" font-size="9.2" fill="#3580eb" text-anchor="end" font-weight="normal" dominant-baseline="central" >营业厅</text></svg></body></html>
